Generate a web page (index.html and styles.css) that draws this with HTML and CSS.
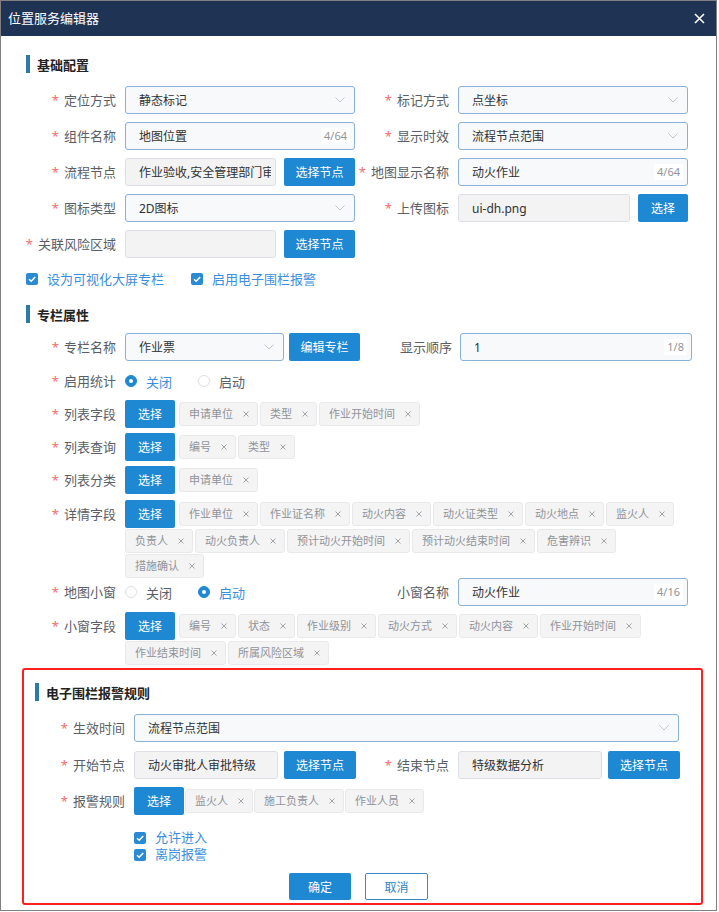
FILE: index.html
```html
<!DOCTYPE html>
<html lang="zh-CN">
<head>
<meta charset="utf-8">
<title>位置服务编辑器</title>
<link rel="stylesheet" href="styles.css">
</head>
<body>
<div class="dialog">
  <div class="dlg-head">
    <span class="dlg-title">位置服务编辑器</span>
    <svg class="close" width="11" height="11" viewBox="0 0 11 11"><path d="M1 1 L10 10 M10 1 L1 10" stroke="#fff" stroke-width="1.6" fill="none"/></svg>
  </div>
  <div class="dlg-body">
    <div class="sec-title"><span class="bar"></span>基础配置</div>
    <div class="rows rows-basic">
      <div class="row">
        <label class="lbl"><i class="req">*</i>定位方式</label>
        <div class="field"><div class="inp"><span class="val">静态标记</span><svg class="arrow" width="10" height="6" viewBox="0 0 10 6"><path d="M0.5 0.5 L5 5 L9.5 0.5" fill="none" stroke="#c0c4cc"/></svg></div></div>
        <label class="lbl lbl-r"><i class="req">*</i>标记方式</label>
        <div class="field"><div class="inp"><span class="val">点坐标</span><svg class="arrow" width="10" height="6" viewBox="0 0 10 6"><path d="M0.5 0.5 L5 5 L9.5 0.5" fill="none" stroke="#c0c4cc"/></svg></div></div>
      </div>
      <div class="row">
        <label class="lbl"><i class="req">*</i>组件名称</label>
        <div class="field"><div class="inp"><span class="val">地图位置</span><span class="cnt">4/64</span></div></div>
        <label class="lbl lbl-r"><i class="req">*</i>显示时效</label>
        <div class="field"><div class="inp"><span class="val">流程节点范围</span><svg class="arrow" width="10" height="6" viewBox="0 0 10 6"><path d="M0.5 0.5 L5 5 L9.5 0.5" fill="none" stroke="#c0c4cc"/></svg></div></div>
      </div>
      <div class="row">
        <label class="lbl"><i class="req">*</i>流程节点</label>
        <div class="field"><div class="inp dis"><span class="val">作业验收,安全管理部门审批,动火审批人审批</span></div><button class="btn w71">选择节点</button></div>
        <label class="lbl lbl-r"><i class="req">*</i>地图显示名称</label>
        <div class="field"><div class="inp"><span class="val">动火作业</span><span class="cnt">4/64</span></div></div>
      </div>
      <div class="row">
        <label class="lbl"><i class="req">*</i>图标类型</label>
        <div class="field"><div class="inp"><span class="val">2D图标</span><svg class="arrow" width="10" height="6" viewBox="0 0 10 6"><path d="M0.5 0.5 L5 5 L9.5 0.5" fill="none" stroke="#c0c4cc"/></svg></div></div>
        <label class="lbl lbl-r"><i class="req">*</i>上传图标</label>
        <div class="field"><div class="inp dis"><span class="val">ui-dh.png</span></div><button class="btn w50">选择</button></div>
      </div>
      <div class="row">
        <label class="lbl"><i class="req">*</i>关联风险区域</label>
        <div class="field"><div class="inp dis"><span class="val"></span></div><button class="btn w71">选择节点</button></div>
      </div>
    </div>
    <div class="chk-row">
      <span class="chk chk-first"><svg width="12" height="12" viewBox="0 0 12 12"><rect width="12" height="12" rx="2" fill="#2a8ad4"/><path d="M3 6.2 L5.2 8.3 L9.2 3.9" fill="none" stroke="#fff" stroke-width="1.5"/></svg>设为可视化大屏专栏</span>
      <span class="chk"><svg width="12" height="12" viewBox="0 0 12 12"><rect width="12" height="12" rx="2" fill="#2a8ad4"/><path d="M3 6.2 L5.2 8.3 L9.2 3.9" fill="none" stroke="#fff" stroke-width="1.5"/></svg>启用电子围栏报警</span>
    </div>

    <div class="sec-title sec2"><span class="bar"></span>专栏属性</div>
    <div class="rows2">
      <div class="row">
        <label class="lbl"><i class="req">*</i>专栏名称</label>
        <div class="field f-col"><div class="inp"><span class="val">作业票</span><svg class="arrow" width="10" height="6" viewBox="0 0 10 6"><path d="M0.5 0.5 L5 5 L9.5 0.5" fill="none" stroke="#c0c4cc"/></svg></div><button class="btn w71">编辑专栏</button></div>
        <label class="lbl lbl-o">显示顺序</label>
        <div class="field f-ord"><div class="inp"><span class="val">1</span><span class="cnt">1/8</span></div></div>
      </div>
      <div class="row mt6">
        <label class="lbl"><i class="req">*</i>启用统计</label>
        <div class="field radios">
          <span class="radio radio-first on"><span class="rd on"><span class="dot"></span></span>关闭</span>
          <span class="radio"><span class="rd"></span>启动</span>
        </div>
      </div>
      <div class="row trow mt5">
        <label class="lbl"><i class="req">*</i>列表字段</label>
        <div class="tags">
          <button class="btn w50 tbtn">选择</button>
          <span class="tag">申请单位<svg class="x" width="6" height="6" viewBox="0 0 6 6"><path d="M0.5 0.5 L5.5 5.5 M5.5 0.5 L0.5 5.5" stroke="#a0a4ab"/></svg></span>
          <span class="tag">类型<svg class="x" width="6" height="6" viewBox="0 0 6 6"><path d="M0.5 0.5 L5.5 5.5 M5.5 0.5 L0.5 5.5" stroke="#a0a4ab"/></svg></span>
          <span class="tag">作业开始时间<svg class="x" width="6" height="6" viewBox="0 0 6 6"><path d="M0.5 0.5 L5.5 5.5 M5.5 0.5 L0.5 5.5" stroke="#a0a4ab"/></svg></span>
        </div>
      </div>
      <div class="row trow mt5">
        <label class="lbl"><i class="req">*</i>列表查询</label>
        <div class="tags">
          <button class="btn w50 tbtn">选择</button>
          <span class="tag">编号<svg class="x" width="6" height="6" viewBox="0 0 6 6"><path d="M0.5 0.5 L5.5 5.5 M5.5 0.5 L0.5 5.5" stroke="#a0a4ab"/></svg></span>
          <span class="tag">类型<svg class="x" width="6" height="6" viewBox="0 0 6 6"><path d="M0.5 0.5 L5.5 5.5 M5.5 0.5 L0.5 5.5" stroke="#a0a4ab"/></svg></span>
        </div>
      </div>
      <div class="row trow mt5">
        <label class="lbl"><i class="req">*</i>列表分类</label>
        <div class="tags">
          <button class="btn w50 tbtn">选择</button>
          <span class="tag">申请单位<svg class="x" width="6" height="6" viewBox="0 0 6 6"><path d="M0.5 0.5 L5.5 5.5 M5.5 0.5 L0.5 5.5" stroke="#a0a4ab"/></svg></span>
        </div>
      </div>
      <div class="row trow mt6">
        <label class="lbl"><i class="req">*</i>详情字段</label>
        <div class="tags">
          <button class="btn w50 tbtn">选择</button>
          <span class="tag">作业单位<svg class="x" width="6" height="6" viewBox="0 0 6 6"><path d="M0.5 0.5 L5.5 5.5 M5.5 0.5 L0.5 5.5" stroke="#a0a4ab"/></svg></span>
          <span class="tag">作业证名称<svg class="x" width="6" height="6" viewBox="0 0 6 6"><path d="M0.5 0.5 L5.5 5.5 M5.5 0.5 L0.5 5.5" stroke="#a0a4ab"/></svg></span>
          <span class="tag">动火内容<svg class="x" width="6" height="6" viewBox="0 0 6 6"><path d="M0.5 0.5 L5.5 5.5 M5.5 0.5 L0.5 5.5" stroke="#a0a4ab"/></svg></span>
          <span class="tag">动火证类型<svg class="x" width="6" height="6" viewBox="0 0 6 6"><path d="M0.5 0.5 L5.5 5.5 M5.5 0.5 L0.5 5.5" stroke="#a0a4ab"/></svg></span>
          <span class="tag">动火地点<svg class="x" width="6" height="6" viewBox="0 0 6 6"><path d="M0.5 0.5 L5.5 5.5 M5.5 0.5 L0.5 5.5" stroke="#a0a4ab"/></svg></span>
          <span class="tag">监火人<svg class="x" width="6" height="6" viewBox="0 0 6 6"><path d="M0.5 0.5 L5.5 5.5 M5.5 0.5 L0.5 5.5" stroke="#a0a4ab"/></svg></span>
          <span class="tag">负责人<svg class="x" width="6" height="6" viewBox="0 0 6 6"><path d="M0.5 0.5 L5.5 5.5 M5.5 0.5 L0.5 5.5" stroke="#a0a4ab"/></svg></span>
          <span class="tag">动火负责人<svg class="x" width="6" height="6" viewBox="0 0 6 6"><path d="M0.5 0.5 L5.5 5.5 M5.5 0.5 L0.5 5.5" stroke="#a0a4ab"/></svg></span>
          <span class="tag">预计动火开始时间<svg class="x" width="6" height="6" viewBox="0 0 6 6"><path d="M0.5 0.5 L5.5 5.5 M5.5 0.5 L0.5 5.5" stroke="#a0a4ab"/></svg></span>
          <span class="tag">预计动火结束时间<svg class="x" width="6" height="6" viewBox="0 0 6 6"><path d="M0.5 0.5 L5.5 5.5 M5.5 0.5 L0.5 5.5" stroke="#a0a4ab"/></svg></span>
          <span class="tag">危害辨识<svg class="x" width="6" height="6" viewBox="0 0 6 6"><path d="M0.5 0.5 L5.5 5.5 M5.5 0.5 L0.5 5.5" stroke="#a0a4ab"/></svg></span>
          <span class="tag">措施确认<svg class="x" width="6" height="6" viewBox="0 0 6 6"><path d="M0.5 0.5 L5.5 5.5 M5.5 0.5 L0.5 5.5" stroke="#a0a4ab"/></svg></span>
        </div>
      </div>
      <div class="row">
        <label class="lbl"><i class="req">*</i>地图小窗</label>
        <div class="field radios">
          <span class="radio radio-first"><span class="rd"></span>关闭</span>
          <span class="radio on"><span class="rd on"><span class="dot"></span></span>启动</span>
        </div>
        <label class="lbl lbl-r">小窗名称</label>
        <div class="field"><div class="inp"><span class="val">动火作业</span><span class="cnt">4/16</span></div></div>
      </div>
      <div class="row trow mt6">
        <label class="lbl"><i class="req">*</i>小窗字段</label>
        <div class="tags">
          <button class="btn w50 tbtn">选择</button>
          <span class="tag">编号<svg class="x" width="6" height="6" viewBox="0 0 6 6"><path d="M0.5 0.5 L5.5 5.5 M5.5 0.5 L0.5 5.5" stroke="#a0a4ab"/></svg></span>
          <span class="tag">状态<svg class="x" width="6" height="6" viewBox="0 0 6 6"><path d="M0.5 0.5 L5.5 5.5 M5.5 0.5 L0.5 5.5" stroke="#a0a4ab"/></svg></span>
          <span class="tag">作业级别<svg class="x" width="6" height="6" viewBox="0 0 6 6"><path d="M0.5 0.5 L5.5 5.5 M5.5 0.5 L0.5 5.5" stroke="#a0a4ab"/></svg></span>
          <span class="tag">动火方式<svg class="x" width="6" height="6" viewBox="0 0 6 6"><path d="M0.5 0.5 L5.5 5.5 M5.5 0.5 L0.5 5.5" stroke="#a0a4ab"/></svg></span>
          <span class="tag">动火内容<svg class="x" width="6" height="6" viewBox="0 0 6 6"><path d="M0.5 0.5 L5.5 5.5 M5.5 0.5 L0.5 5.5" stroke="#a0a4ab"/></svg></span>
          <span class="tag">作业开始时间<svg class="x" width="6" height="6" viewBox="0 0 6 6"><path d="M0.5 0.5 L5.5 5.5 M5.5 0.5 L0.5 5.5" stroke="#a0a4ab"/></svg></span>
          <span class="tag">作业结束时间<svg class="x" width="6" height="6" viewBox="0 0 6 6"><path d="M0.5 0.5 L5.5 5.5 M5.5 0.5 L0.5 5.5" stroke="#a0a4ab"/></svg></span>
          <span class="tag">所属风险区域<svg class="x" width="6" height="6" viewBox="0 0 6 6"><path d="M0.5 0.5 L5.5 5.5 M5.5 0.5 L0.5 5.5" stroke="#a0a4ab"/></svg></span>
        </div>
      </div>
    </div>

    <div class="alarm">
      <div class="sec-title sec3"><span class="bar"></span>电子围栏报警规则</div>
      <div class="row a-row1">
        <label class="lbl lbl-a"><i class="req">*</i>生效时间</label>
        <div class="field f-wide"><div class="inp"><span class="val">流程节点范围</span><svg class="arrow" width="10" height="6" viewBox="0 0 10 6"><path d="M0.5 0.5 L5 5 L9.5 0.5" fill="none" stroke="#c0c4cc"/></svg></div></div>
      </div>
      <div class="row a-row2">
        <label class="lbl lbl-a"><i class="req">*</i>开始节点</label>
        <div class="field f-a"><div class="inp dis"><span class="val">动火审批人审批特级</span></div><button class="btn w72">选择节点</button></div>
        <label class="lbl lbl-ar"><i class="req">*</i>结束节点</label>
        <div class="field f-a"><div class="inp dis"><span class="val">特级数据分析</span></div><button class="btn w72">选择节点</button></div>
      </div>
      <div class="row trow a-row3">
        <label class="lbl lbl-a"><i class="req">*</i>报警规则</label>
        <div class="tags tags-a">
          <button class="btn w50 tbtn">选择</button>
          <span class="tag">监火人<svg class="x" width="6" height="6" viewBox="0 0 6 6"><path d="M0.5 0.5 L5.5 5.5 M5.5 0.5 L0.5 5.5" stroke="#a0a4ab"/></svg></span>
          <span class="tag">施工负责人<svg class="x" width="6" height="6" viewBox="0 0 6 6"><path d="M0.5 0.5 L5.5 5.5 M5.5 0.5 L0.5 5.5" stroke="#a0a4ab"/></svg></span>
          <span class="tag">作业人员<svg class="x" width="6" height="6" viewBox="0 0 6 6"><path d="M0.5 0.5 L5.5 5.5 M5.5 0.5 L0.5 5.5" stroke="#a0a4ab"/></svg></span>
        </div>
      </div>
      <div class="a-checks">
        <span class="chk"><svg width="12" height="12" viewBox="0 0 12 12"><rect width="12" height="12" rx="2" fill="#2a8ad4"/><path d="M3 6.2 L5.2 8.3 L9.2 3.9" fill="none" stroke="#fff" stroke-width="1.5"/></svg>允许进入</span>
        <span class="chk"><svg width="12" height="12" viewBox="0 0 12 12"><rect width="12" height="12" rx="2" fill="#2a8ad4"/><path d="M3 6.2 L5.2 8.3 L9.2 3.9" fill="none" stroke="#fff" stroke-width="1.5"/></svg>离岗报警</span>
      </div>
      <div class="footer">
        <button class="btn ok">确定</button>
        <button class="btn cancel">取消</button>
      </div>
    </div>
  </div>
</div>
</body>
</html>
```

FILE: styles.css
```css
* { box-sizing: border-box; }
html, body { margin: 0; padding: 0; background: #fff; }
body {
  font-family: "Noto Sans", "Noto Sans CJK SC", sans-serif;
  font-size: 13px;
  color: #5a5e66;
}
.dialog {
  width: 717px;
  height: 911px;
  border: 1px solid #808080;
  overflow: hidden;
  background: #fff;
}
.dlg-head {
  height: 35px;
  background: #1f3354;
  display: flex;
  align-items: center;
  justify-content: space-between;
  padding: 0 11px 0 7px;
  color: #fff;
  font-size: 13px;
}
.dlg-title { line-height: 35px; }
.close { display: block; }
.dlg-body { padding-top: 19px; }

.sec-title {
  display: flex;
  align-items: center;
  height: 18px;
  margin-left: 25px;
  font-weight: bold;
  color: #222;
  font-size: 13px;
}
.sec-title .bar {
  width: 4px;
  height: 18px;
  background: #2b7aa8;
  margin-right: 7px;
}
.sec2 { margin-top: 18px; }
.sec3 { margin-left: 11px; }

.rows-basic {
  margin-top: 13px;
  display: flex;
  flex-direction: column;
  gap: 8px;
}
.rows2 { margin-top: 10px; }
.row {
  display: flex;
  align-items: center;
  min-height: 28px;
}
.trow { align-items: flex-start; }
.mt5 { margin-top: 5px; }
.mt6 { margin-top: 6px; }

.lbl {
  flex: none;
  width: 124px;
  padding-right: 9px;
  text-align: right;
  white-space: nowrap;
  line-height: 28px;
  color: #5a5e66;
}
.lbl-r { width: 103px; }
.lbl-o { width: 100px; padding-right: 8px; }
.lbl-a { width: 110px; }
.lbl-ar { width: 102px; }
.req {
  font-style: normal;
  color: #f56c6c;
  margin-right: 5px;
}

.field {
  flex: none;
  width: 230px;
  display: flex;
  align-items: center;
  gap: 8px;
}
.f-col { width: 235px; gap: 5px; }
.f-ord { width: 232px; }
.f-wide { width: 545px; }
.f-a { width: 222px; gap: 6px; }

.inp {
  flex: 1;
  min-width: 0;
  height: 28px;
  border: 1px solid #8bb0d6;
  background: #f7f9fb;
  border-radius: 3px;
  display: flex;
  align-items: center;
  padding: 0 4px 0 13px;
  color: #303133;
  font-size: 12px;
}
.inp.dis {
  background: #f3f3f3;
  border-color: #dcdfe6;
}
.inp .val {
  flex: 1;
  min-width: 0;
  overflow: hidden;
  white-space: nowrap;
}
.cnt {
  flex: none;
  color: #909399;
  background: #fff;
  font-size: 11px;
  line-height: 16px;
  padding: 0 3px;
}
.arrow { flex: none; display: block; margin-right: 5px; }

.btn {
  flex: none;
  height: 28px;
  background: #1e88d3;
  color: #fff;
  border: none;
  border-radius: 2px;
  font: inherit;
  font-size: 12px;
  padding: 0;
  display: flex;
  align-items: center;
  justify-content: center;
}
.w50 { width: 50px; }
.w71 { width: 71px; }
.w72 { width: 72px; }

.chk-row {
  margin-top: 13px;
  height: 16px;
  display: flex;
  align-items: center;
  padding-left: 25px;
}
.chk {
  display: flex;
  align-items: center;
  gap: 9px;
  color: #3a8ee0;
  font-size: 13px;
  line-height: 17px;
}
.chk svg { flex: none; display: block; }
.chk-first { width: 165px; }

.radios { gap: 0; height: 28px; }
.radio {
  display: flex;
  align-items: center;
  gap: 9px;
  color: #5a5e66;
}
.radio.on { color: #3a8ee0; }
.radio-first { width: 73px; }
.rd {
  width: 12px;
  height: 12px;
  border-radius: 50%;
  border: 1px solid #dcdfe6;
  background: #fff;
  display: flex;
  align-items: center;
  justify-content: center;
}
.rd.on { background: #1e88d3; border-color: #1e88d3; }
.rd .dot {
  width: 4px;
  height: 4px;
  border-radius: 50%;
  background: #fff;
}

.tags {
  width: 560px;
  display: flex;
  flex-wrap: wrap;
  align-items: center;
  row-gap: 1px;
}
.tbtn { margin-right: 4px; }
.tag {
  height: 24px;
  display: inline-flex;
  align-items: center;
  padding: 0 8px 0 9px;
  background: #f4f4f5;
  border: 1px solid #e9e9eb;
  border-radius: 3px;
  color: #909399;
  font-size: 11px;
  line-height: 16px;
  margin-right: 2px;
  white-space: nowrap;
}
.tag .x { display: block; margin-left: 10px; flex: none; }
.tags-a .tbtn { margin-right: 1px; }
.tags-a .tag { margin-right: 1px; }

.alarm {
  margin: 3px 0 0 21px;
  width: 681px;
  border: 2px solid #ff1f1f;
  border-radius: 3px;
  padding: 13px 0 3px 0;
}
.a-row1 { margin-top: 13px; }
.a-row2 { margin-top: 9px; }
.a-row3 { margin-top: 8px; }
.a-checks {
  margin-top: 14px;
  padding-left: 110px;
  display: flex;
  flex-direction: column;
}
.a-checks .chk { height: 17px; }
.footer {
  margin-top: 10px;
  display: flex;
  justify-content: center;
  gap: 14px;
  padding-right: 8px;
}
.ok { width: 62px; height: 27px; }
.cancel {
  width: 63px;
  height: 27px;
  background: #fff;
  border: 1px solid #3d88c2;
  color: #2f7fc1;
}
```
